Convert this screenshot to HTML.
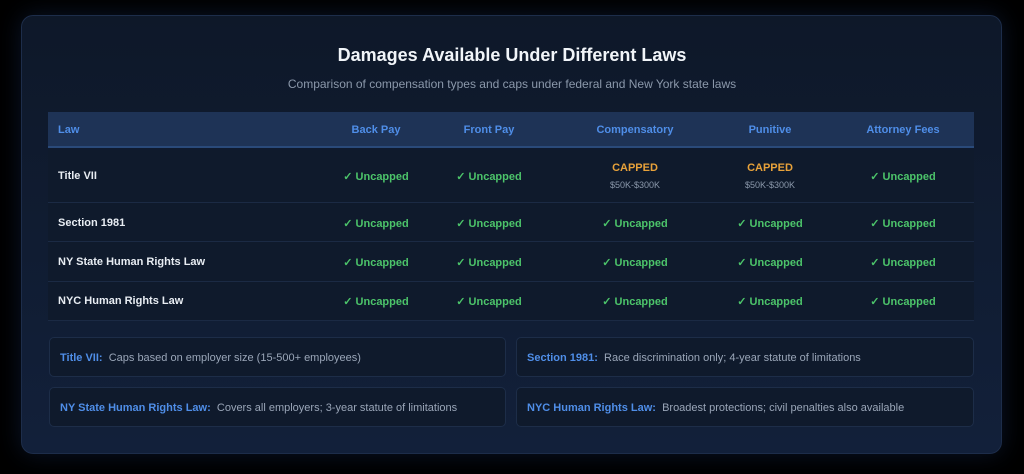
<!DOCTYPE html>
<html><head><meta charset="utf-8"><style>
*{margin:0;padding:0;box-sizing:border-box}
body{width:1024px;height:474px;background:#000;font-family:"Liberation Sans",sans-serif;position:relative;overflow:hidden}
.card{position:absolute;left:21px;top:15px;width:981px;height:439px;border-radius:12px;background:linear-gradient(180deg,#0e1829 0%,#12203a 100%);border:1px solid #1d2d4a;box-shadow:0 0 24px rgba(40,80,160,.25)}
h1{position:absolute;left:0;right:0;top:45px;text-align:center;color:#f1f5f9;font-size:18px;font-weight:bold}
.sub{position:absolute;left:0;right:0;top:77px;text-align:center;color:#8b98ab;font-size:12px}
.hdr{position:absolute;left:48px;top:112px;width:926px;height:36px;background:#1e3356;border-bottom:2px solid #2a4a7a}
.row{position:absolute;left:48px;width:926px;background:#0f1a2c;border-bottom:1px solid #1b2a44}
.c{position:absolute;width:140px;text-align:center;font-size:11px;font-weight:bold}
.hdr .c,.hdr .l{color:#4f8ee8;top:12px}
.l{position:absolute;left:10px;font-size:11px;font-weight:bold;color:#e8edf3}
.u{color:#4cc46a}
.cap{color:#e8a23a;font-size:11px;font-weight:bold}
.rng{color:#8b98ab;font-size:9px;font-weight:normal;margin-top:6px}
.note{position:absolute;height:40px;border:1px solid #1d2d48;border-radius:5px;background:#0f1a2c;font-size:11px;color:#9aa6b8;padding:14px 10px 0}
.note b{color:#4f8ee8}
</style></head><body>
<div class="card"></div>
<h1>Damages Available Under Different Laws</h1>
<div class="sub">Comparison of compensation types and caps under federal and New York state laws</div>
<div class="hdr">
<div class="l" style="color:#4f8ee8;font-weight:bold">Law</div>
<div class="c" style="left:258px">Back Pay</div>
<div class="c" style="left:371px">Front Pay</div>
<div class="c" style="left:517px">Compensatory</div>
<div class="c" style="left:652px">Punitive</div>
<div class="c" style="left:785px">Attorney Fees</div>
</div>
<div class="row" style="top:150px;height:53px">
<div class="l" style="top:20px">Title VII</div>
<div class="c u" style="left:258px;top:20px">✓ Uncapped</div>
<div class="c u" style="left:371px;top:20px">✓ Uncapped</div>
<div class="c" style="left:517px;top:12px"><div class="cap">CAPPED</div><div class="rng">$50K-$300K</div></div>
<div class="c" style="left:652px;top:12px"><div class="cap">CAPPED</div><div class="rng">$50K-$300K</div></div>
<div class="c u" style="left:785px;top:20px">✓ Uncapped</div>
</div>
<div class="row" style="top:203px;height:39px">
<div class="l" style="top:14px">Section 1981</div>
<div class="c u" style="left:258px;top:14px">✓ Uncapped</div><div class="c u" style="left:371px;top:14px">✓ Uncapped</div><div class="c u" style="left:517px;top:14px">✓ Uncapped</div><div class="c u" style="left:652px;top:14px">✓ Uncapped</div><div class="c u" style="left:785px;top:14px">✓ Uncapped</div>
</div>
<div class="row" style="top:242px;height:40px">
<div class="l" style="top:14px">NY State Human Rights Law</div>
<div class="c u" style="left:258px;top:14px">✓ Uncapped</div><div class="c u" style="left:371px;top:14px">✓ Uncapped</div><div class="c u" style="left:517px;top:14px">✓ Uncapped</div><div class="c u" style="left:652px;top:14px">✓ Uncapped</div><div class="c u" style="left:785px;top:14px">✓ Uncapped</div>
</div>
<div class="row" style="top:282px;height:39px">
<div class="l" style="top:13px">NYC Human Rights Law</div>
<div class="c u" style="left:258px;top:13px">✓ Uncapped</div><div class="c u" style="left:371px;top:13px">✓ Uncapped</div><div class="c u" style="left:517px;top:13px">✓ Uncapped</div><div class="c u" style="left:652px;top:13px">✓ Uncapped</div><div class="c u" style="left:785px;top:13px">✓ Uncapped</div>
</div>
<div class="note" style="left:49px;top:337px;width:457px"><b>Title VII:</b>&nbsp; Caps based on employer size (15-500+ employees)</div>
<div class="note" style="left:516px;top:337px;width:458px"><b>Section 1981:</b>&nbsp; Race discrimination only; 4-year statute of limitations</div>
<div class="note" style="left:49px;top:387px;width:457px"><b>NY State Human Rights Law:</b>&nbsp; Covers all employers; 3-year statute of limitations</div>
<div class="note" style="left:516px;top:387px;width:458px"><b>NYC Human Rights Law:</b>&nbsp; Broadest protections; civil penalties also available</div>
</body></html>
